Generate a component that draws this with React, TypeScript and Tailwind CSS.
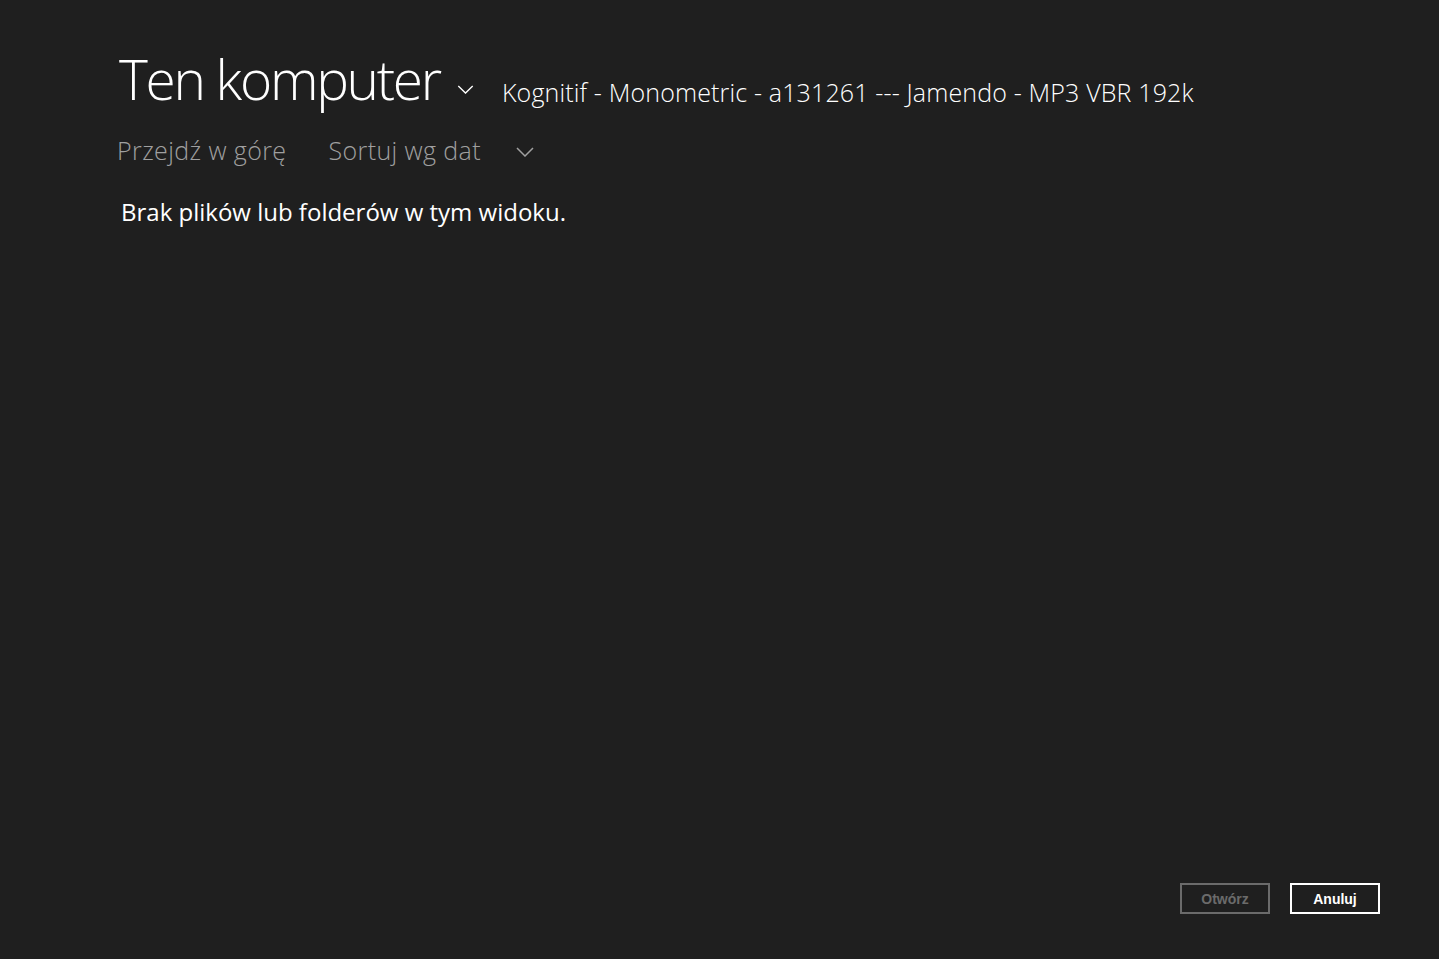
function Chevron({ className }: { className: string }) {
  return (
    <svg viewBox="0 0 18 10" className={className} fill="none" stroke="currentColor" strokeWidth="1.5">
      <path d="M1 1l8 8 8-8" />
    </svg>
  );
}

export default function App() {
  return (
    <div className="flex h-[959px] w-full flex-col bg-[#1f1f1f] font-['Open_Sans',_'Noto_Sans',_sans-serif]">
      <header className="flex items-end pl-[119px] pt-[46px]">
        <h1 className="text-[55px] leading-[66px] font-light tracking-[-2.3px] text-white">
          Ten komputer
        </h1>
        <Chevron className="mb-[18px] ml-[17px] h-[9px] w-[17px] text-white" />
        <span className="mb-[3px] ml-[28px] text-[25px] leading-[34px] font-light tracking-[0.15px] text-white">
          Kognitif - Monometric - a131261 --- Jamendo - MP3 VBR 192k
        </span>
      </header>

      <nav className="mt-[21px] flex items-center pl-[117px] text-[25px] leading-[34px] font-light tracking-[0.4px] text-[#a0a0a0]">
        <span>Przejdź w górę</span>
        <span className="ml-[42px]">Sortuj wg dat</span>
        <Chevron className="ml-[35px] mt-[4px] h-[10px] w-[18px] text-[#a0a0a0]" />
      </nav>

      <p className="mt-[29px] pl-[121px] text-[24px] leading-[32px] tracking-[0px] text-white">
        Brak plików lub folderów w tym widoku.
      </p>

      <div className="mt-auto flex justify-end gap-[20px] pb-[45px] pr-[59px]">
        <button
          disabled
          className="h-[31px] w-[90px] border-2 border-[#6b6b6b] pt-[2px] font-['Liberation_Sans',_sans-serif] text-[14px] font-bold text-[#6b6b6b]"
        >
          Otwórz
        </button>
        <button className="h-[31px] w-[90px] border-2 border-white pt-[2px] font-['Liberation_Sans',_sans-serif] text-[14px] font-bold text-white">
          Anuluj
        </button>
      </div>
    </div>
  );
}
